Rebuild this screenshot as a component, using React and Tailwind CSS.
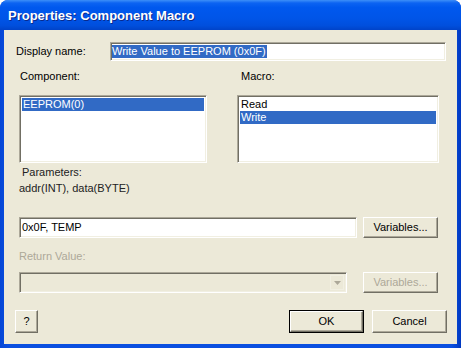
import React from 'react';

const sunken =
  'border border-t-[#ACA899] border-l-[#ACA899] border-r-white border-b-white shadow-[inset_1px_1px_0_#716F64,inset_-1px_-1px_0_#F1EFE2]';
const raised =
  'border border-t-white border-l-white border-r-[#716F64] border-b-[#716F64] shadow-[inset_-1px_-1px_0_#ACA899] bg-[#ECE9D8]';

const Button = ({ children, disabled, className = '' }) => (
  <div
    className={`flex items-center justify-center ${raised} ${
      disabled ? 'text-[#ACA899]' : 'text-black'
    } ${className}`}
  >
    {children}
  </div>
);

const App = () => {
  return (
    <div className="w-[461px] h-[348px] bg-white font-['Liberation_Sans',Arial,sans-serif] text-[11px] leading-[13px] text-black">
      <div className="flex h-full flex-col overflow-hidden rounded-t-[8px] bg-[linear-gradient(to_right,#0546D6,#0A4FE0_2%,#0A4FE0_98%,#0038C0)]">
        {/* Title bar */}
        <div className="flex h-[30px] shrink-0 items-center pl-[8px] pt-[1px] bg-[linear-gradient(to_bottom,#3D8FF8_0%,#0C63F2_10%,#0058EE_25%,#0055E8_60%,#004FDD_85%,#0043C9_100%)]">
          <span className="text-[13px] font-bold text-white [text-shadow:1px_1px_#0A2A8C]">
            Properties: Component Macro
          </span>
        </div>

        {/* Client area */}
        <div className="mx-[4px] mb-[4px] flex flex-1 flex-col bg-[#ECE9D8]">
          {/* Display name */}
          <div className="mt-[12px] flex items-center">
            <span className="ml-[12px] w-[94px]">Display name:</span>
            <div className={`flex h-[19px] w-[336px] items-center bg-white ${sunken}`}>
              <span className="ml-[1px] bg-[#316AC5] pr-[1px] text-white">Write Value to EEPROM (0x0F)</span>
            </div>
          </div>

          {/* Component / Macro */}
          <div className="mt-[9px] flex">
            <div className="ml-[15px] flex w-[218px] flex-col">
              <span className="pl-[1px]">Component:</span>
              <div className={`mt-[12px] h-[68px] w-[188px] bg-white p-[2px] ${sunken}`}>
                <div className="bg-[#316AC5] px-[1px] text-white">EEPROM(0)</div>
              </div>
            </div>
            <div className="flex flex-col">
              <span className="pl-[4px]">Macro:</span>
              <div className={`mt-[12px] h-[68px] w-[202px] bg-white p-[2px] ${sunken}`}>
                <div className="px-[1px]">Read</div>
                <div className="bg-[#316AC5] px-[1px] text-white">Write</div>
              </div>
            </div>
          </div>

          {/* Parameters */}
          <div className="ml-[15px] mt-[1px] flex flex-col leading-[16px] text-[#222]">
            <span className="pl-[3px]">Parameters:</span>
            <span>addr(INT), data(BYTE)</span>
          </div>

          <div className="ml-[15px] mt-[21px] flex gap-[6px]">
            <div className={`flex h-[21px] w-[338px] items-center bg-white pl-[2px] ${sunken}`}>
              0x0F, TEMP
            </div>
            <Button className="h-[21px] w-[75px]">Variables...</Button>
          </div>

          {/* Return value (disabled) */}
          <span className="ml-[15px] mt-[12px] text-[#ACA899]">Return Value:</span>
          <div className="ml-[15px] mt-[9px] flex gap-[16px]">
            <div className={`flex h-[21px] w-[328px] items-center justify-end bg-[#ECE9D8] pr-[2px] ${sunken}`}>
              <div className="flex h-[15px] w-[14px] items-center justify-center border border-[#F1EFE2] bg-[#ECE9D8]">
                <svg width="7" height="4" viewBox="0 0 7 4">
                  <path d="M0 0h7L3.5 4z" fill="#ACA899" />
                </svg>
              </div>
            </div>
            <Button disabled className="h-[21px] w-[75px]">Variables...</Button>
          </div>

          {/* Bottom buttons */}
          <div className="mt-[17px] flex items-center">
            <Button className="ml-[11px] h-[23px] w-[23px] text-[#1A6FC0]">?</Button>
            <div className="ml-auto flex gap-[8px] pr-[10px]">
              <div className="h-[23px] w-[75px] border border-black">
                <Button className="h-full w-full">OK</Button>
              </div>
              <Button className="h-[23px] w-[75px]">Cancel</Button>
            </div>
          </div>
        </div>
      </div>
    </div>
  );
};

export default App;
